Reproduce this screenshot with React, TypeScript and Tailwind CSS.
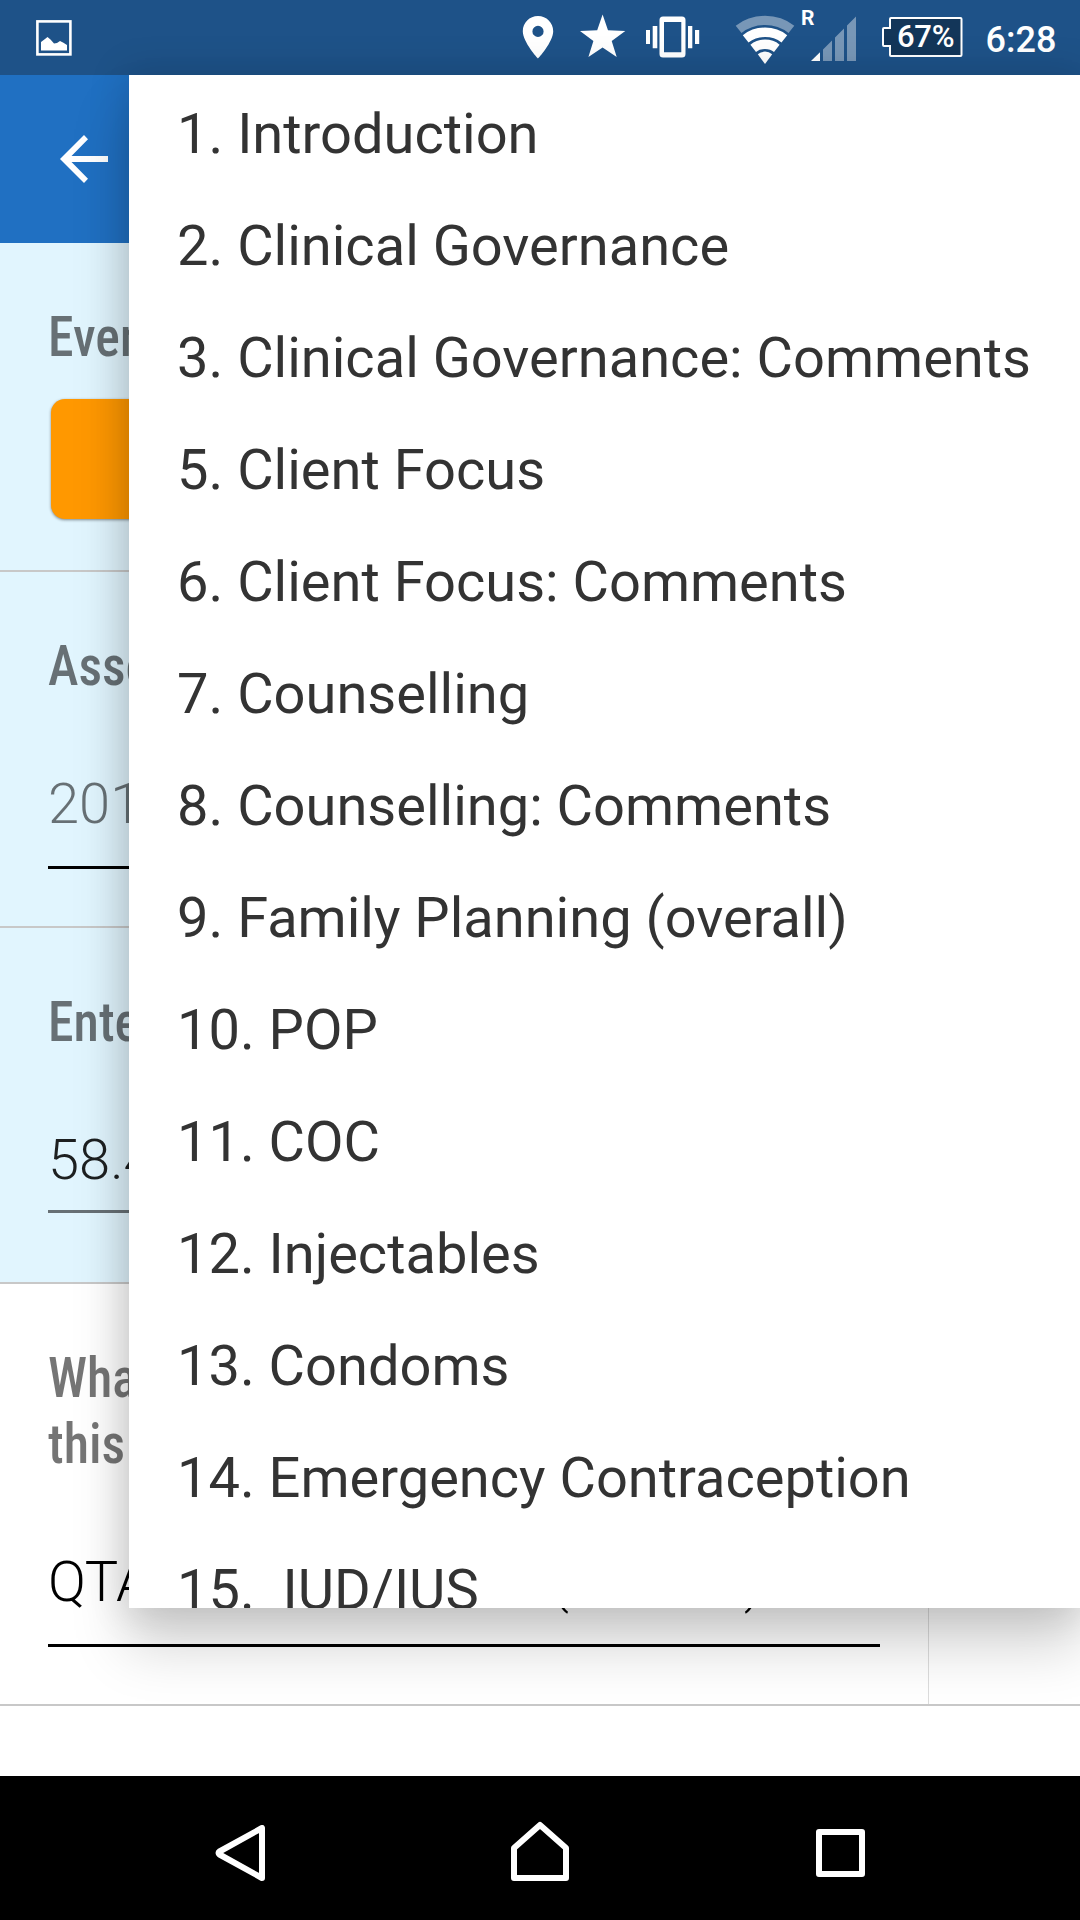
import React from "react";

const sections = [
  "1. Introduction",
  "2. Clinical Governance",
  "3. Clinical Governance: Comments",
  "5. Client Focus",
  "6. Client Focus: Comments",
  "7. Counselling",
  "8. Counselling: Comments",
  "9. Family Planning (overall)",
  "10. POP",
  "11. COC",
  "12. Injectables",
  "13. Condoms",
  "14. Emergency Contraception",
  "15.  IUD/IUS",
];

function StatusBar() {
  return (
    <header className="flex h-[75px] shrink-0 items-start bg-[#1e5288] text-white">
      <svg className="mt-5 ml-9 h-9 w-9" viewBox="0 0 36 36">
        <rect x="1.4" y="1.4" width="33" height="33" fill="none" stroke="#fff" strokeWidth="2.6" />
        <path d="M5 30.5V22l4-3 2.500-2 3 2.500 3.500 4 3-.5 3-2 3 1.500 4 2.500v5.500z" fill="#fff" />
      </svg>
      <svg className="mt-4 ml-[450px] h-[43px] w-8" viewBox="0 0 32 43">
        <path
          fillRule="evenodd"
          d="M16 0C7.500 0 .8 6.700.8 15.200.8 26 16 42.500 16 42.500S31.200 26 31.200 15.200C31.200 6.700 24.500 0 16 0zm0 21a5.600 5.600 0 1 1 0-11.200A5.600 5.600 0 0 1 16 21z"
          fill="#fff"
        />
      </svg>
      <svg className="mt-[14px] ml-[26px] h-11 w-[46px]" viewBox="0 0 46 44">
        <path d="M22.600.5l5.400 15.800 17.300.6-13.600 10.200 5 16-14.100-9.600-14.200 9.600 5-16L0 16.900l17.200-.6z" fill="#fff" />
      </svg>
      <svg className="mt-4 ml-[19px] h-[42px] w-[55px]" viewBox="0 0 55 42" fill="#fff">
        <path d="M1 14h4v14H1zM7.700 10h4.600v22.300H7.700zM43 10h4.300v22.300H43zM50 14h4.200v14H50z" />
        <path
          fillRule="evenodd"
          d="M18 .5h19a3.500 3.500 0 0 1 3.500 3.500v34a3.500 3.500 0 0 1-3.500 3.500H18a3.500 3.500 0 0 1-3.500-3.500V4A3.500 3.500 0 0 1 18 .5zM19 6v30.300h17.300V6z"
        />
      </svg>
      <svg className="mt-[15px] ml-[35px] h-[50px] w-[60px]" viewBox="0 0 60 50" fill="#fff">
        <path opacity=".4" d="M.7 10.800Q13 .8 30 .8T59.300 10.800L53.500 18Q43.500 10 30 10T6.500 18z" />
        <path d="M7.800 20.300Q17 12.600 30 12.600t22.200 7.700L46.500 27.400Q39.500 22 30 22t-16.500 5.400z" />
        <path d="M15.400 29.700Q21.500 24.600 30 24.600t14.600 5.100l-5.600 7.200Q35.500 34 30 34t-9 2.900z" />
        <path d="M22.800 39.200Q26 36.600 30 36.600t7.200 2.600L30 49z" />
      </svg>
      <div className="relative ml-[15px] h-[61px] w-[47px]">
        <span className="absolute -left-[9px] top-[6px] text-[21px] leading-6 font-bold">R</span>
        <svg className="mt-4 h-[45px] w-[47px]" viewBox="0 0 47 45" fill="#fff">
          <path d="M1 45l9-8.700V45z" />
          <path opacity=".4" d="M13 45V33.500l9-9V45zM25 45V21.500l9-9V45zM37 45V9.500l9-9V45z" />
        </svg>
      </div>
      <div className="relative mt-[17px] ml-[25px] h-10 w-[82px]">
        <svg className="h-10 w-[82px]" viewBox="0 0 82 40">
          <path
            d="M9 1h69.500q1 0 1 1v36q0 1-1 1H9q-1 0-1-1v-9H2q-1 0-1-1V12q0-1 1-1h6V2q0-1 1-1z"
            fill="#133659"
            stroke="#fff"
            strokeWidth="2"
          />
        </svg>
        <span className="absolute top-0 left-[15px] text-[31px] leading-10 font-medium tracking-[-0.3px]">67%</span>
      </div>
      <time className="mt-[18px] ml-[21.5px] text-[36px] leading-[44px] font-medium">6:28</time>
    </header>
  );
}

function Label({ children }: { children: React.ReactNode }) {
  return (
    <h2 className="origin-left scale-x-[0.925] font-['Roboto_Condensed',Roboto,sans-serif] text-[56px] leading-[66px] font-medium whitespace-nowrap text-black/54 [font-stretch:75%]">
      {children}
    </h2>
  );
}

function Menu() {
  return (
    <nav className="absolute top-[75px] left-[129px] h-[1533px] w-[951px] overflow-hidden bg-white pt-[3px] shadow-[0_38px_52px_2px_rgba(0,0,0,0.17),0_0_36px_4px_rgba(0,0,0,0.13)]">
      <ul>
        {sections.map((name) => (
          <li key={name} className="h-28 px-12 text-[56px] leading-[112px] whitespace-pre text-[#333]">
            {name}
          </li>
        ))}
      </ul>
    </nav>
  );
}

export default function App() {
  return (
    <div className="relative flex h-[1920px] w-[1080px] flex-col overflow-hidden bg-white font-[Roboto,sans-serif]">
      <StatusBar />
      <div className="flex h-[168px] shrink-0 items-center bg-[#2070c2] pl-[60px]">
        <svg className="-mt-px h-12 w-12" viewBox="0 0 48 48">
          <path d="M48 21H11.500L28 4.200 24 0 0 24l24 24 4-4.200L11.500 27H48z" fill="#fff" />
        </svg>
      </div>
      <main className="flex flex-1 flex-col">
        <section className="h-[329px] border-b-2 border-[#c8c8c8] bg-[#e1f5fe] px-12 pt-[61px]">
          <Label>Event</Label>
          <div className="mt-[29px] ml-[3px] h-[120px] w-[400px] rounded-[14px] bg-[#ff9800] shadow-[0_1px_3px_rgba(0,0,0,0.45)]" />
        </section>
        <section className="h-[356px] border-b-2 border-[#c8c8c8] bg-[#e1f5fe] px-12 pt-[61px]">
          <Label>Asses</Label>
          <p className="mt-[72px] border-b-3 border-black pb-[29px] text-[56px] leading-[66px] font-light text-black/54">201</p>
        </section>
        <section className="h-[356px] border-b-2 border-[#c8c8c8] bg-[#e1f5fe] px-12 pt-[61px]">
          <Label>Enter</Label>
          <p className="mt-[72px] border-b-3 border-black/54 pb-[17px] text-[56px] leading-[66px] font-light text-black/87">58.4</p>
        </section>
        <section className="flex h-[422px] border-b-2 border-[#c8c8c8] bg-white">
          <div className="w-[929px] border-r border-[#dcdcdc] pt-[61px] pr-12 pl-12">
            <Label>
              What
              <br />
              this
            </Label>
            <p className="mt-[72px] flex border-b-3 border-black pb-[29px] text-[56px] leading-[66px] font-light text-black">
              <span className="w-[503px]">QTA</span>
              <span className="w-[193px]">(</span>
              <span>)</span>
            </p>
          </div>
        </section>
      </main>
      <footer className="flex h-36 shrink-0 items-start bg-black pl-[215px]">
        <svg className="mt-[49px] h-[57px] w-[51px]" viewBox="0 0 51 57">
          <path d="M47 3v50L4.500 29.500q-2-1.500 0-3z" fill="none" stroke="#fff" strokeWidth="6" strokeLinejoin="round" />
        </svg>
        <svg className="mt-[45px] ml-[245px] h-[60px] w-[58px]" viewBox="0 0 58 60">
          <path d="M29 4L55 27v30H3V27z" fill="none" stroke="#fff" strokeWidth="6" strokeLinejoin="round" />
        </svg>
        <div className="mt-[53px] ml-[247px] h-12 w-[49px] rounded-[3px] border-6 border-white" />
      </footer>
      <Menu />
    </div>
  );
}
